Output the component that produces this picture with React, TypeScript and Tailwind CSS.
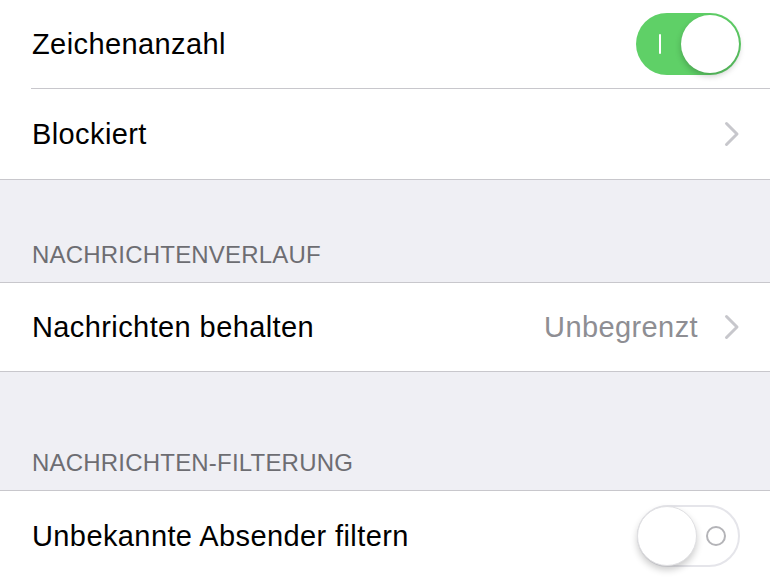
import type { ReactNode } from 'react'

function Chevron() {
  return (
    <svg width="16" height="26" viewBox="0 0 16 26" fill="none" className="shrink-0">
      <path d="M2.5 2.5 L13 13 L2.5 23.5" stroke="#c7c7cc" strokeWidth="3" strokeLinecap="round" strokeLinejoin="round" />
    </svg>
  )
}

function Toggle({ on }: { on: boolean }) {
  if (on) {
    return (
      <div className="relative flex h-[62px] w-[105px] items-center rounded-full bg-[#5fd067]">
        <div className="ml-[23px] h-[20px] w-[2px] rounded-full bg-white" />
        <div className="absolute right-[2px] top-[2px] h-[58px] w-[58px] rounded-full bg-white shadow-[0_3px_6px_rgba(0,0,0,0.22)]" />
      </div>
    )
  }
  return (
    <div className="relative flex h-[62px] w-[103px] items-center justify-end rounded-full border-2 border-[#e5e5ea] bg-white">
      <div className="mr-[12px] h-[20px] w-[20px] rounded-full border-2 border-[#b4b4b8]" />
      <div className="absolute left-[-2px] top-[-1px] h-[60px] w-[60px] rounded-full border border-[#e0e0e3] bg-white shadow-[0_4px_7px_rgba(0,0,0,0.2)]" />
    </div>
  )
}

function Row({ label, right, height }: { label: string; right: ReactNode; height: string }) {
  return (
    <div className={`flex items-center justify-between bg-white pl-[32px] pr-[30px] ${height}`}>
      <span className="text-[29px] leading-none tracking-[0.4px] text-black">{label}</span>
      {right}
    </div>
  )
}

function Header({ label, height }: { label: string; height: string }) {
  return (
    <div className={`flex items-end bg-[#efeff4] pb-[15px] pl-[32px] ${height}`}>
      <span className="text-[24px] leading-none tracking-[0.2px] text-[#6d6d72]">{label}</span>
    </div>
  )
}

export default function App() {
  return (
    <div className="h-[578px] w-[770px] overflow-hidden bg-[#efeff4] font-['Liberation_Sans',Arial,sans-serif]">
      <div className="bg-white">
        <Row label="Zeichenanzahl" height="h-[88px]" right={<div className="mr-[-1px]"><Toggle on /></div>} />
        <div className="ml-[31px] h-px bg-[#c8c7cc]" />
        <Row label="Blockiert" height="h-[90px]" right={<Chevron />} />
      </div>
      <div className="h-px bg-[#c8c7cc]" />
      <Header label="NACHRICHTENVERLAUF" height="h-[102px]" />
      <div className="h-px bg-[#c8c7cc]" />
      <Row
        label="Nachrichten behalten"
        height="h-[88px]"
        right={
          <div className="flex items-center gap-[26px]">
            <span className="text-[29px] leading-none tracking-[0.4px] text-[#8e8e93]">Unbegrenzt</span>
            <Chevron />
          </div>
        }
      />
      <div className="h-px bg-[#c8c7cc]" />
      <Header label="NACHRICHTEN-FILTERUNG" height="h-[118px]" />
      <div className="h-px bg-[#c8c7cc]" />
      <Row label="Unbekannte Absender filtern" height="h-[90px]" right={<Toggle on={false} />} />
    </div>
  )
}
